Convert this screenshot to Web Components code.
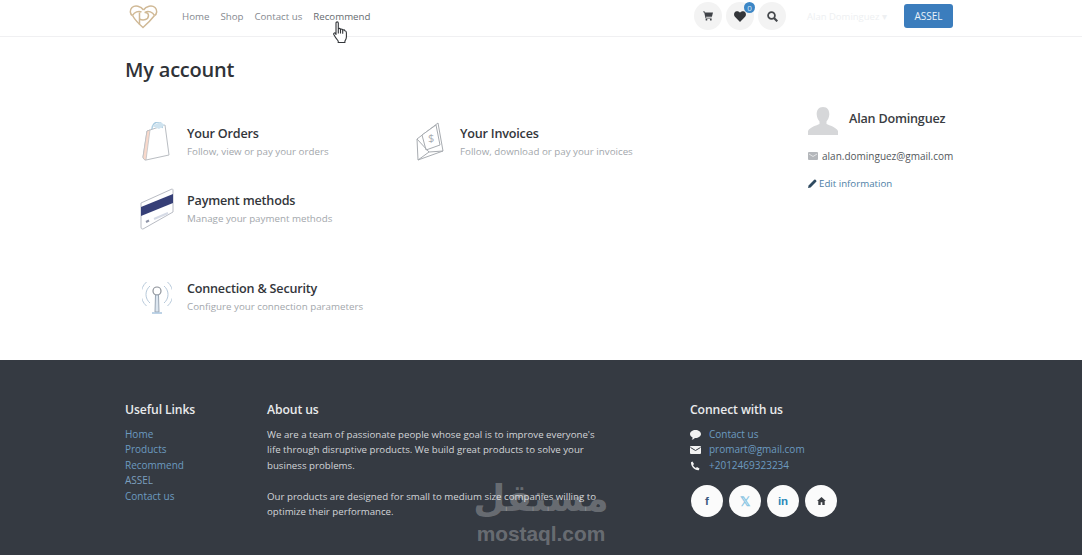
<!DOCTYPE html>
<html lang="en">
<head>
<meta charset="utf-8">
<title>My account</title>
<style>
  html, body { margin: 0; padding: 0; background: #fff; }
  body { width: 1082px; height: 555px; overflow: hidden; position: relative; font-family: "Open Sans", "Liberation Sans", sans-serif; }
</style>
</head>
<body>
<site-header></site-header>
<account-page></account-page>
<site-footer></site-footer>
<hand-cursor></hand-cursor>
<mostaql-mark></mostaql-mark>

<script>
class RoundIcon extends HTMLElement {
  constructor() {
    super();
    this.shadow = this.attachShadow({ mode: 'open' });
  }
  connectedCallback() {
    this.shadow.innerHTML = `
      <style>
        :host { display: flex; width: 28px; height: 28px; border-radius: 50%; background: #f3f3f3; align-items: center; justify-content: center; position: relative; }
        .badge { position: absolute; top: 0; right: -1px; }
      </style>
      <slot></slot><div class="badge"><slot name="badge"></slot></div>`;
  }
}
customElements.define('round-icon', RoundIcon);

class SiteHeader extends HTMLElement {
  constructor() {
    super();
    this.shadow = this.attachShadow({ mode: 'open' });
  }
  connectedCallback() {
    this.shadow.innerHTML = `
      <style>
        :host { display: block; height: 37px; box-sizing: border-box; border-bottom: 1px solid #f0f0f2; background: #fff; }
        .bar { display: flex; align-items: center; height: 32px; padding: 0 129px 4px 129px; }
        .logo { display: block; width: 29px; height: 25px; margin-right: 24px; }
        nav { display: flex; gap: 11px; font-size: 9.7px; color: #85898f; }
        nav span:last-child { color: #666b70; }
        .tools { margin-left: auto; display: flex; gap: 4px; }
        .user { margin-left: 21px; width: 81px; font-size: 9.5px; color: #eef0f2; white-space: nowrap; }
        .btn { margin-left: 16px; width: 49px; height: 24px; border-radius: 3px; background: #3b7dbd; color: #eaf2f9; font-size: 10px; display: flex; align-items: center; justify-content: center; }
        .count { display: flex; width: 11px; height: 11px; border-radius: 50%; background: #3d87c6; color: #dcebf6; font-size: 8px; line-height: 11px; align-items: center; justify-content: center; }
      </style>
      <div class="bar">
        <svg class="logo" viewBox="0 0 29 25" fill="none" stroke="#d0b996" stroke-width="1.500">
          <path d="M14.500 6C12 2 6 1 3 3.500.5 6 .8 10 3.500 11.500"/>
          <path d="M14.500 6C17 2 23 1 26 3.500c2.500 2.500 2.200 6.500-.5 8"/>
          <path d="M3.500 11.500c2-3.500 6-5 9-3.500M25.500 11.500c-2-3.500-6-5-9-3.500"/>
          <path d="M3.500 11.500C6 16 10 20 14 23.500c4-3.500 8-7.500 11.500-12"/>
          <path d="M10.500 8.500v12M10.500 15c4 2 9 .5 9-3.500 0-2-2-3.500-4-3"/>
        </svg>
        <nav><span>Home</span><span>Shop</span><span>Contact us</span><span>Recommend</span></nav>
        <div class="tools">
          <round-icon><svg width="10" height="10" viewBox="0 0 11 10" fill="#3f4247"><path d="M0 0h2l.4 1.200H11L9.800 5.800H3.400l.2 1H9.500v1H2.800L1.300 1H0z"/><circle cx="3.800" cy="9" r="1"/><circle cx="8.600" cy="9" r="1"/></svg></round-icon>
          <round-icon><svg width="12" height="11" viewBox="0 0 12 11" fill="#33363a"><path d="M6 11 .9 5.800C-.5 4.200-.1 1.600 1.700.6 3.200-.2 5 .2 6 1.700 7 .2 8.800-.2 10.300.6c1.800 1 2.200 3.600.8 5.200z"/></svg><span class="count" slot="badge">0</span></round-icon>
          <round-icon><svg width="11" height="11" viewBox="0 0 11 11" fill="none" stroke="#45484c" stroke-width="1.800"><circle cx="4.500" cy="4.500" r="3.400"/><path d="M7 7l3.300 3.300" stroke-width="2.200"/></svg></round-icon>
        </div>
        <div class="user">Alan Dominguez ▾</div>
        <div class="btn">ASSEL</div>
      </div>`;
  }
}
customElements.define('site-header', SiteHeader);

class AccountCard extends HTMLElement {
  constructor() {
    super();
    this.shadow = this.attachShadow({ mode: 'open' });
  }
  connectedCallback() {
    this.shadow.innerHTML = `
      <style>
        :host { display: flex; align-items: center; height: 44px; }
        .ico { width: 50px; flex: none; display: flex; justify-content: center; padding-right: 10px; box-sizing: border-box; }
        .t { font-size: 12.600px; font-weight: 600; color: #33363b; line-height: 18px; letter-spacing: -.2px; }
        .d { font-size: 9.750px; color: #a3a7ac; line-height: 16px; margin-top: 1px; white-space: nowrap; }
      </style>
      <div class="ico"><slot name="icon"></slot></div>
      <div>
        <div class="t">${this.getAttribute('heading')}</div>
        <div class="d">${this.getAttribute('text')}</div>
      </div>`;
  }
}
customElements.define('account-card', AccountCard);

class ProfilePanel extends HTMLElement {
  constructor() {
    super();
    this.shadow = this.attachShadow({ mode: 'open' });
  }
  connectedCallback() {
    this.shadow.innerHTML = `
      <style>
        :host { display: block; width: 150px; }
        .who { display: flex; align-items: center; gap: 11px; height: 28px; }
        .name { font-size: 12.600px; font-weight: 600; color: #3a3d42; letter-spacing: -.2px; margin-top: -6px; }
        .mail { display: flex; align-items: center; gap: 4px; margin-top: 13px; font-size: 10px; color: #53575c; white-space: nowrap; height: 16px; }
        .edit { display: flex; align-items: center; gap: 2px; margin-top: 11px; font-size: 9.700px; color: #4d7ea6; height: 16px; }
      </style>
      <div class="who">
        <svg width="30" height="28" viewBox="0 0 30 28" fill="#d6d7d9"><path d="M15 0c4.500 0 6.500 3.500 6.300 7.500-.2 3-1.300 5.300-2.800 7v2.500c3 1.500 9.500 3 11.500 7v4H0v-4c2-4 8.500-5.500 11.500-7v-2.500c-1.500-1.700-2.600-4-2.800-7C8.500 3.500 10.500 0 15 0z"/></svg>
        <span class="name">Alan Dominguez</span>
      </div>
      <div class="mail">
        <svg width="10" height="8" viewBox="0 0 10 8"><rect width="10" height="8" rx="1" fill="#b4b7bb"/><path d="M1 2l4 2.500L9 2" fill="none" stroke="#eee" stroke-width=".8"/></svg>
        <span>alan.dominguez@gmail.com</span>
      </div>
      <div class="edit">
        <svg width="9" height="9" viewBox="0 0 9 9" fill="#2f4a60"><path d="M0 9l.6-2.600L6.200.8a1 1 0 0 1 1.400 0l.6.6a1 1 0 0 1 0 1.400L2.600 8.400z"/></svg>
        <span>Edit information</span>
      </div>`;
  }
}
customElements.define('profile-panel', ProfilePanel);

class AccountPage extends HTMLElement {
  constructor() {
    super();
    this.shadow = this.attachShadow({ mode: 'open' });
  }
  connectedCallback() {
    this.shadow.innerHTML = `
      <style>
        :host { display: block; height: 323px; box-sizing: border-box; padding: 20px 125px 0; background: #fff; }
        h1 { margin: 0; font-size: 20px; font-weight: 600; color: #2f3237; line-height: 26px; letter-spacing: -.2px; }
        .cols { display: flex; margin-top: 37px; }
        .cards { flex: none; width: 683px; padding-left: 12px; box-sizing: border-box; display: grid; grid-template-columns: 273px 1fr; grid-template-rows: 44px 44px 44px; row-gap: 23px; }
        .conn { grid-row: 3; grid-column: 1; margin-top: 21px; }
        profile-panel { margin-top: -13px; }
      </style>
      <h1>My account</h1>
      <div class="cols">
        <div class="cards">
          <account-card heading="Your Orders" text="Follow, view or pay your orders">
            <svg slot="icon" width="32" height="40" viewBox="0 0 32 40" fill="none">
              <path d="M6 9 24 3l4 30-23 5c-2 0-3-2-3-3z" fill="#fff" stroke="#b9bdc2"/>
              <path d="M6 9 2 35c0 1 1 3 3 3L9 8z" fill="#f9d9cb" stroke="#b9bdc2" stroke-width=".7"/>
              <path d="M11 7c0-4 3-7 6-7s5 3 4 6" stroke="#a9cbe0" stroke-width="1.500"/>
              <path d="M11 4l7 3 6-4-5-3z" fill="#cfe3ef"/>
            </svg>
          </account-card>
          <account-card heading="Your Invoices" text="Follow, download or pay your invoices">
            <svg slot="icon" width="28" height="40" viewBox="0 0 28 40" fill="none" stroke="#a8acb1">
              <path d="M1 17 22 1l5 28-25 9z" fill="#fff"/>
              <path d="M6 13 20 3l4 20-14 5z" fill="#fff"/>
              <path d="M1 17l12 13 14-1M2 38l11-8"/>
              <text x="12" y="20" font-size="11" fill="#a8acb1" stroke="none" font-family="Open Sans">$</text>
            </svg>
          </account-card>
          <account-card heading="Payment methods" text="Manage your payment methods">
            <svg slot="icon" width="34" height="42" viewBox="0 0 34 42" fill="none">
              <path d="M1 15 32 1c1 0 1 1 1 1v22L3 41c-1 0-2 0-2-2z" fill="#fff" stroke="#b9bcc4"/>
              <path d="M1 19 33 6v9L1 28z" fill="#363f77"/>
              <path d="M6 34l3-1.500" stroke="#8f94a8" stroke-width="2"/>
              <path d="M14 31l14-6" stroke="#d6dbe6" stroke-width="2"/>
            </svg>
          </account-card>
          <account-card class="conn" heading="Connection &amp; Security" text="Configure your connection parameters">
            <svg slot="icon" width="30" height="36" viewBox="0 0 30 36" fill="none" stroke="#b7c9da">
              <path d="M8 7a11 11 0 0 0 0 17M22 7a11 11 0 0 1 0 17M4.500 3a16 16 0 0 0 0 24M25.500 3a16 16 0 0 1 0 24"/>
              <circle cx="15" cy="12" r="4" stroke="#8d9299" stroke-width="1.200" fill="#fff"/>
              <path d="M13.500 16h3l.5 17h-4z" fill="#dce6f0" stroke="#9aa6b4"/>
              <path d="M10 34h10" stroke="#a9c4de" stroke-width="1.500"/>
            </svg>
          </account-card>
        </div>
        <profile-panel></profile-panel>
      </div>`;
  }
}
customElements.define('account-page', AccountPage);

class SocialButton extends HTMLElement {
  constructor() {
    super();
    this.shadow = this.attachShadow({ mode: 'open' });
  }
  connectedCallback() {
    this.shadow.innerHTML = `
      <style>
        :host { display: flex; width: 32px; height: 32px; border-radius: 50%; background: #fbfbfb; align-items: center; justify-content: center; font-size: 11.500px; font-weight: 700; font-family: "Liberation Sans", sans-serif; }
      </style>
      <slot></slot>`;
  }
}
customElements.define('social-button', SocialButton);

class SiteFooter extends HTMLElement {
  constructor() {
    super();
    this.shadow = this.attachShadow({ mode: 'open' });
  }
  connectedCallback() {
    this.shadow.innerHTML = `
      <style>
        :host { display: block; height: 195px; box-sizing: border-box; background: #353a42; padding: 41px 125px 0; color: #d3d5d8; font-size: 9.700px; line-height: 15.400px; }
        .row { display: flex; }
        .links { width: 142px; flex: none; }
        .about { width: 423px; flex: none; }
        h3 { margin: 0 0 8px; font-size: 12.200px; line-height: 18px; font-weight: 600; color: #e9eaec; letter-spacing: -.1px; }
        .lnk { color: #6c9ac0; font-size: 10px; }
        .links div:nth-of-type(4) { color: #7c9fbe; }
        p { margin: 0 0 15.400px; width: 335px; }
        .c { display: flex; align-items: center; gap: 8px; }
        .c svg { width: 11px; height: 10px; flex: none; }
        .soc { display: flex; gap: 6px; margin-top: 12px; margin-left: 1px; }
      </style>
      <div class="row">
        <div class="links">
          <h3>Useful Links</h3>
          <div class="lnk">Home</div>
          <div class="lnk">Products</div>
          <div class="lnk">Recommend</div>
          <div class="lnk">ASSEL</div>
          <div class="lnk">Contact us</div>
        </div>
        <div class="about">
          <h3>About us</h3>
          <p>We are a team of passionate people whose goal is to improve everyone's life through disruptive products. We build great products to solve your business problems.</p>
          <p>Our products are designed for small to medium size companies willing to optimize their performance.</p>
        </div>
        <div>
          <h3>Connect with us</h3>
          <div class="c lnk"><svg viewBox="0 0 11 10" fill="#f2f2f2"><path d="M5.500 0C8.500 0 11 1.700 11 4s-2.500 4-5.500 4L4.800 8C4 9 3 9.600 1.600 9.800 2.300 9 2.600 8.300 2.600 7.400 1 6.700 0 5.500 0 4 0 1.700 2.500 0 5.500 0z"/></svg><span>Contact us</span></div>
          <div class="c lnk"><svg viewBox="0 0 11 10"><rect y="1" width="11" height="8" rx="1" fill="#f2f2f2"/><path d="M.5 2.500l5 3 5-3" fill="none" stroke="#353a42"/></svg><span>promart@gmail.com</span></div>
          <div class="c lnk"><svg viewBox="0 0 11 10" fill="#f2f2f2"><path d="M2.500.5 4 3 3 4.200c.6 1.200 1.500 2.100 2.800 2.800L7 6l2.500 1.500L8.800 9.200C4.500 9.500.8 5.500 1 1.200z"/></svg><span>+2012469323234</span></div>
          <div class="soc">
            <social-button style="color:#3d5a80">f</social-button>
            <social-button style="color:#8cc6e3;font-size:13px">𝕏</social-button>
            <social-button style="color:#2b87b8">in</social-button>
            <social-button><svg width="9" height="8" viewBox="0 0 11 10" fill="#3b3e43"><path d="M5.500 0 11 5H9.500v5h-3V6.500h-2V10h-3V5H0z"/></svg></social-button>
          </div>
        </div>
      </div>`;
  }
}
customElements.define('site-footer', SiteFooter);

class HandCursor extends HTMLElement {
  constructor() {
    super();
    this.shadow = this.attachShadow({ mode: 'open' });
  }
  connectedCallback() {
    this.shadow.innerHTML = `
      <style>:host { position: absolute; left: 333px; top: 21px; width: 15px; height: 23px; display: block; }</style>
      <svg width="15" height="23" viewBox="0 0 15 23" fill="#fff" stroke="#33363a" stroke-width="1.100" stroke-linejoin="round">
        <path d="M3 2c0-1.500 2.300-1.500 2.300 0v6.500c0-1.500 2.200-1.500 2.200 0v.5c0-1.300 2.200-1.300 2.200 0v.7c0-1.200 2.100-1.200 2.100 0 .8 0 1.600.6 1.600 2v4.300c0 2-.8 3-1.500 4v1.500H5.200V20C3.500 18 1.800 15.500.8 13.500c-.5-1.200.8-2.200 1.700-1.200L3 13.500z"/>
        <path d="M5.300 9v3.500M7.500 9v3.500M9.700 9.700v3" fill="none"/>
      </svg>`;
  }
}
customElements.define('hand-cursor', HandCursor);

class MostaqlMark extends HTMLElement {
  constructor() {
    super();
    this.shadow = this.attachShadow({ mode: 'open' });
  }
  connectedCallback() {
    this.shadow.innerHTML = `
      <style>
        :host { position: absolute; left: 470px; top: 477px; width: 142px; display: block; text-align: center; color: rgba(255,255,255,.27); pointer-events: none; }
        .ar { font: 700 37px/44px "DejaVu Sans", sans-serif; height: 45px; }
        .en { font: 700 20.800px/24px "Liberation Sans", sans-serif; }
      </style>
      <div class="ar" dir="rtl">مستقل</div>
      <div class="en">mostaql.com</div>`;
  }
}
customElements.define('mostaql-mark', MostaqlMark);
</script>
</body>
</html>
